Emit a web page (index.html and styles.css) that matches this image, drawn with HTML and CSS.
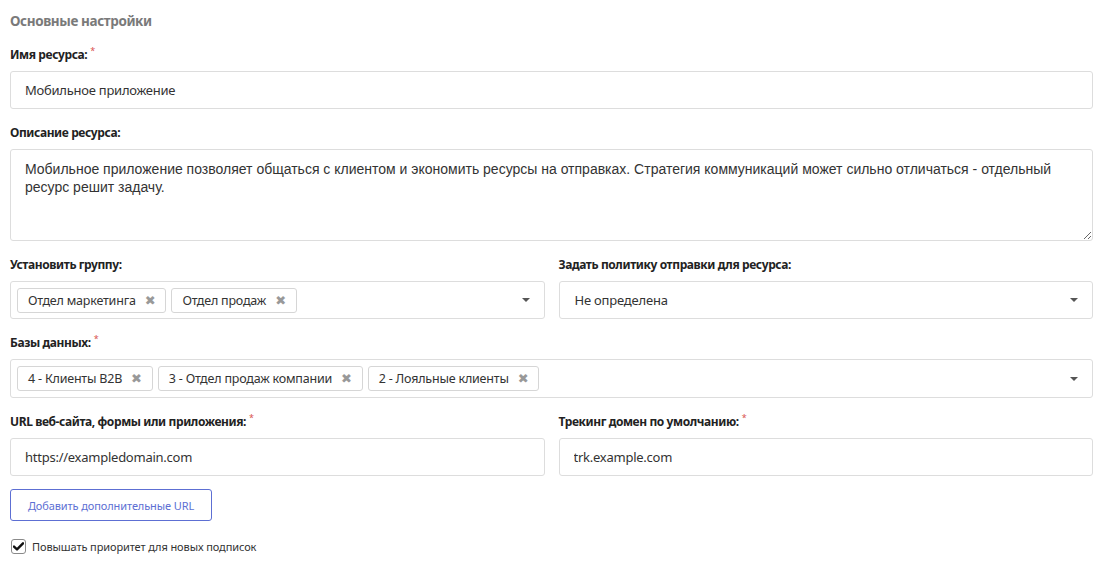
FILE: index.html
```html
<!DOCTYPE html>
<html lang="ru">
<head>
<meta charset="utf-8">
<link rel="stylesheet" href="styles.css">
</head>
<body>
<div class="page">
  <h3 class="title">Основные настройки</h3>

  <div class="field">
    <label class="label">Имя ресурса:<span class="req">*</span></label>
    <input class="input" type="text" value="Мобильное приложение">
  </div>

  <div class="field">
    <label class="label">Описание ресурса:</label>
    <textarea class="textarea">Мобильное приложение позволяет общаться с клиентом и экономить ресурсы на отправках. Стратегия коммуникаций может сильно отличаться - отдельный ресурс решит задачу.</textarea>
  </div>

  <div class="row">
    <div class="field">
      <label class="label">Установить группу:</label>
      <div class="select">
        <div class="chips">
          <span class="chip">Отдел маркетинга <span class="x">✖</span></span>
          <span class="chip">Отдел продаж <span class="x">✖</span></span>
        </div>
        <span class="caret"></span>
      </div>
    </div>
    <div class="field">
      <label class="label">Задать политику отправки для ресурса:</label>
      <div class="select single">
        <span class="value">Не определена</span>
        <span class="caret"></span>
      </div>
    </div>
  </div>

  <div class="field">
    <label class="label">Базы данных:<span class="req">*</span></label>
    <div class="select tall">
      <div class="chips">
        <span class="chip">4 - Клиенты B2B <span class="x">✖</span></span>
        <span class="chip">3 - Отдел продаж компании <span class="x">✖</span></span>
        <span class="chip">2 - Лояльные клиенты <span class="x">✖</span></span>
      </div>
      <span class="caret"></span>
    </div>
  </div>

  <div class="row">
    <div class="field">
      <label class="label">URL веб-сайта, формы или приложения:<span class="req">*</span></label>
      <input class="input" type="text" value="https://exampledomain.com">
    </div>
    <div class="field">
      <label class="label">Трекинг домен по умолчанию:<span class="req">*</span></label>
      <input class="input" type="text" value="trk.example.com">
    </div>
  </div>

  <button class="btn" type="button">Добавить дополнительные URL</button>

  <label class="check">
    <span class="box"><svg width="11" height="9" viewBox="0 0 11 9"><path d="M1 4.6 L4 7.4 L10 1.3" fill="none" stroke="#111" stroke-width="2.4" stroke-linecap="round" stroke-linejoin="round"/></svg></span>
    <span class="check-text">Повышать приоритет для новых подписок</span>
  </label>
</div>
</body>
</html>
```

FILE: styles.css
```css
* { box-sizing: border-box; }
html, body { margin: 0; padding: 0; background: #fff; }
body {
  font-family: "Noto Sans", "Open Sans", sans-serif;
  color: #333;
}
.page {
  padding: 11px 10px 0 10px;
  display: flex;
  flex-direction: column;
}
.title {
  margin: 0 0 15px 0;
  font-size: 13.5px;
  line-height: 20px;
  font-weight: 700;
  color: #7a7a7a;
  letter-spacing: -0.4px;
}
.field {
  display: flex;
  flex-direction: column;
  margin-bottom: 15px;
  min-width: 0;
}
.label {
  display: block;
  font-size: 12px;
  line-height: 18px;
  height: 18px;
  font-weight: 700;
  color: #222;
  margin-bottom: 7px;
  letter-spacing: -0.4px;
}
.req {
  color: #d9534f;
  font-size: 9px;
  vertical-align: top;
  position: relative;
  top: -4px;
  margin-left: 3px;
  font-weight: 400;
}
.input {
  height: 38px;
  border: 1px solid #ddd;
  border-radius: 3px;
  padding: 0 14px;
  font-family: "Noto Sans", sans-serif;
  font-size: 13px;
  letter-spacing: -0.25px;
  color: #333;
  outline: none;
  width: 100%;
}
.textarea {
  height: 92px;
  border: 1px solid #ddd;
  border-radius: 3px;
  padding: 10px 14px;
  font-family: "Liberation Sans", Arial, sans-serif;
  font-size: 14px;
  line-height: 18px;
  color: #333;
  resize: vertical;
  outline: none;
  width: 100%;
  display: block;
}
.row {
  display: grid;
  grid-template-columns: 1fr 1fr;
  column-gap: 14px;
}
.select {
  height: 38px;
  border: 1px solid #ddd;
  border-radius: 3px;
  display: flex;
  align-items: center;
  padding: 0 14px 0 6px;
}
.select.tall { height: 39px; }
.select.single { padding-left: 15px; }
.chips {
  flex: 1;
  display: flex;
  gap: 5px;
}
.chip {
  display: inline-flex;
  align-items: center;
  height: 25px;
  border: 1px solid #d6d6d6;
  border-radius: 3px;
  padding: 0 10px 0 10px;
  font-size: 12.5px;
  letter-spacing: -0.2px;
  color: #333;
  white-space: nowrap;
}
.x {
  color: #999;
  font-size: 13px;
  margin-left: 9px;
  font-family: "DejaVu Sans", sans-serif;
}
.value {
  flex: 1;
  font-size: 13px;
  letter-spacing: -0.2px;
  color: #333;
}
.caret {
  width: 0;
  height: 0;
  border-left: 4px solid transparent;
  border-right: 4px solid transparent;
  border-top: 4px solid #555;
}
.btn {
  align-self: flex-start;
  margin-top: -2px;
  height: 32px;
  width: 202px;
  border: 1px solid #5d6fd3;
  border-radius: 3px;
  background: #fff;
  color: #5d6fd3;
  font-family: "Noto Sans", sans-serif;
  font-size: 11px;
  letter-spacing: -0.1px;
  padding: 0;
}
.check {
  display: flex;
  align-items: center;
  margin-top: 18px;
  margin-left: 1px;
  gap: 6px;
}
.box {
  width: 15px;
  height: 15px;
  border: 1px solid #8a8a8a;
  border-radius: 3px;
  display: flex;
  align-items: center;
  justify-content: center;
}
.check-text {
  font-size: 11px;
  letter-spacing: -0.1px;
  color: #333;
}
```
